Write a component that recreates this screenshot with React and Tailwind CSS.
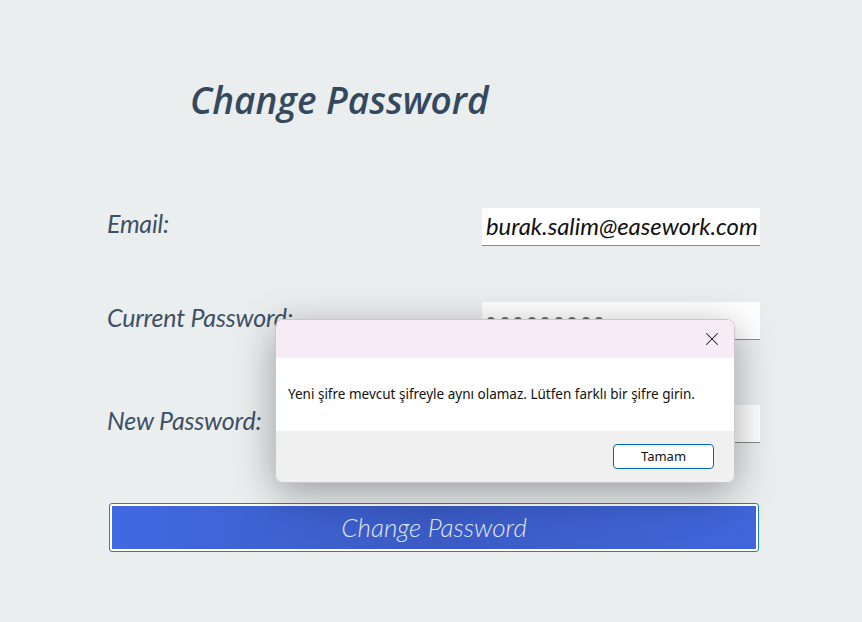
import { X } from 'lucide-react';

function Field({ label, children }) {
  return (
    <div className="flex items-center justify-between h-[38px]">
      <span className="pb-[6px] font-['Lato'] italic text-[25px] text-[#3d5166] tracking-[-0.2px]">{label}</span>
      {children}
    </div>
  );
}

function Box({ children }) {
  return (
    <div className="w-[278px] h-[38px] bg-white border-b border-[#8a8a8a] flex items-center px-[4px] overflow-hidden">
      {children}
    </div>
  );
}

function MessageBox() {
  return (
    <div className="absolute left-[275px] top-[319px] w-[460px] h-[164px] rounded-[8px] overflow-hidden border border-[#c8c8c8] shadow-[0_10px_40px_rgba(0,0,0,0.35)] flex flex-col font-['Noto_Sans',sans-serif]">
      <div className="h-[38px] bg-[#f7ecf6] flex items-center justify-end pr-[11px]">
        <X size={22} strokeWidth={1.1} className="text-[#222]" />
      </div>
      <div className="h-[73px] bg-white flex items-center pl-[12px]">
        <span className="text-[13.5px] text-[#111]">
          Yeni şifre mevcut şifreyle aynı olamaz. Lütfen farklı bir şifre girin.
        </span>
      </div>
      <div className="flex-1 bg-[#f0f0f0] flex items-center justify-end pr-[20px]">
        <button className="w-[101px] h-[25px] bg-white border border-[#0067c0] rounded-[4px] text-[13px] text-[#111]">
          Tamam
        </button>
      </div>
    </div>
  );
}

export default function App() {
  return (
    <div className="relative w-[862px] h-[622px] bg-[#ebeeef] overflow-hidden">
      <h1 className="pl-[190px] pt-[78px] font-['Open_Sans',sans-serif] italic font-semibold text-[37px] leading-[44px] text-[#34495e]">
        Change Password
      </h1>

      <div className="pl-[107px] pr-[102px] mt-[86px] flex flex-col gap-[56px]">
        <Field label="Email:">
          <Box>
            <span className="font-['Lato'] italic text-[23.8px] text-[#111]">burak.salim@easework.com</span>
          </Box>
        </Field>
        <Field label="Current Password:">
          <Box>
            <div className="flex gap-[5.5px] pl-[1px] pt-[1px]">
              {Array.from({ length: 9 }).map((_, i) => (
                <span key={i} className="w-[8px] h-[8px] rounded-full bg-[#6b6b6b]" />
              ))}
            </div>
          </Box>
        </Field>
        <div className="mt-[9px]">
          <Field label="New Password:">
            <Box />
          </Field>
        </div>
      </div>

      <div className="ml-[109px] mr-[103px] mt-[60px] h-[49px] rounded-[3px] border border-[#1a7fd4] p-[2px] bg-white">
        <button className="w-full h-full bg-gradient-to-r from-[#4169e1] via-[#3a5bc4] to-[#4066db] font-['Lato'] italic font-light text-[26px] text-[#e4e6ee]">
          Change Password
        </button>
      </div>

      <MessageBox />
    </div>
  );
}
